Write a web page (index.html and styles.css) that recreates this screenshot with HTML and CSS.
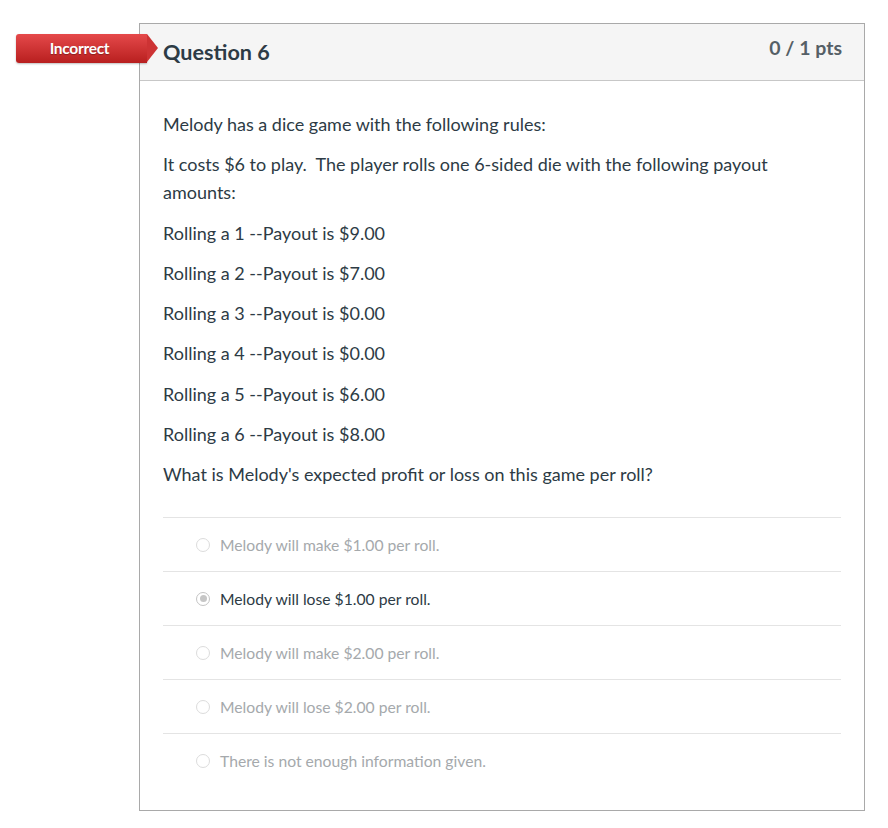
FILE: index.html
```html
<!DOCTYPE html>
<html lang="en">
<head>
    <meta charset="UTF-8">
    <title>Question 6</title>
    <link rel="stylesheet" href="styles.css">
</head>
<body>

    <div class="quiz">
        <div class="question">
            <!-- Bandeau de resultat -->
            <div class="result-flag">Incorrect</div>

            <div class="question-header">
                <span class="question-title">Question 6</span>
                <span class="question-pts">0 / 1 pts</span>
            </div>

            <div class="question-body">
                <p>Melody has a dice game with the following rules:</p>
                <p>It costs $6 to play.&nbsp; The player rolls one 6-sided die with the following payout amounts:</p>
                <p>Rolling a 1 --Payout is $9.00</p>
                <p>Rolling a 2 --Payout is $7.00</p>
                <p>Rolling a 3 --Payout is $0.00</p>
                <p>Rolling a 4 --Payout is $0.00</p>
                <p>Rolling a 5 --Payout is $6.00</p>
                <p>Rolling a 6 --Payout is $8.00</p>
                <p>What is Melody's expected profit or loss on this game per roll?</p>

                <div class="answers">
                    <div class="answer">
                        <span class="radio"></span>
                        <span class="answer-text">Melody will make $1.00 per roll.</span>
                    </div>
                    <div class="answer selected">
                        <span class="radio"></span>
                        <span class="answer-text">Melody will lose $1.00 per roll.</span>
                    </div>
                    <div class="answer">
                        <span class="radio"></span>
                        <span class="answer-text">Melody will make $2.00 per roll.</span>
                    </div>
                    <div class="answer">
                        <span class="radio"></span>
                        <span class="answer-text">Melody will lose $2.00 per roll.</span>
                    </div>
                    <div class="answer">
                        <span class="radio"></span>
                        <span class="answer-text">There is not enough information given.</span>
                    </div>
                </div>
            </div>
        </div>
    </div>

</body>
</html>
```

FILE: styles.css
```css
* {
    box-sizing: border-box;
    margin: 0;
    padding: 0;
}

body {
    font-family: Lato, "Open Sans", sans-serif;
    background-color: #fff;
    color: #2d3b45;
}

.quiz {
    padding: 23px 23px 0 139px;
}

.question {
    position: relative;
    width: 726px;
    border: 1px solid #a9a9a9;
}

.result-flag {
    position: absolute;
    top: 10px;
    left: -124px;
    width: 131px;
    height: 29px;
    line-height: 29px;
    padding-right: 4px;
    background: linear-gradient(#e5494a, #b81f1f);
    border-radius: 3px 0 0 3px;
    color: white;
    font-weight: bold;
    font-size: 15.5px;
    letter-spacing: -0.3px;
    text-align: center;
    text-shadow: 0 1px 1px rgba(0, 0, 0, 0.3);
    box-shadow: 0 1px 2px rgba(0, 0, 0, 0.25);
    z-index: 2;
}

/* pointe de la fleche */
.result-flag::after {
    content: "";
    position: absolute;
    top: 0;
    right: -11px;
    border-top: 14.5px solid transparent;
    border-bottom: 14.5px solid transparent;
    border-left: 11px solid #cd3334;
}

.question-header {
    display: flex;
    justify-content: space-between;
    background-color: #f5f5f5;
    border-bottom: 1px solid #c7c7c7;
    height: 57px;
    padding: 12px 22px 0 23px;
}

.question-title {
    font-size: 21.6px;
    font-weight: bold;
    line-height: 32px;
}

.question-pts {
    font-size: 19.5px;
    font-weight: bold;
    color: #555f66;
    line-height: 24px;
}

.question-body {
    padding: 29px 23px 23px 23px;
}

.question-body p {
    font-size: 18px;
    line-height: 28px;
    margin-bottom: 12.25px;
}

.answers {
    margin-top: 29px;
}

.answer {
    display: flex;
    align-items: center;
    height: 54px;
    border-top: 1px solid #e4e4e4;
    padding-left: 34px;
    font-size: 15.7px;
    color: #a5a9ac;
}

.answer.selected {
    color: #2d3b45;
}

.radio {
    width: 14px;
    height: 14px;
    border: 1px solid #dcdcdc;
    border-radius: 50%;
    background-color: #fff;
    margin-left: -1px;
    margin-right: 10px;
    position: relative;
}

.answer.selected .radio {
    border-color: #c4c4c4;
}

.answer.selected .radio::after {
    content: "";
    position: absolute;
    top: 2.5px;
    left: 2.5px;
    width: 7px;
    height: 7px;
    border-radius: 50%;
    background-color: #c6c6c6;
}
```
